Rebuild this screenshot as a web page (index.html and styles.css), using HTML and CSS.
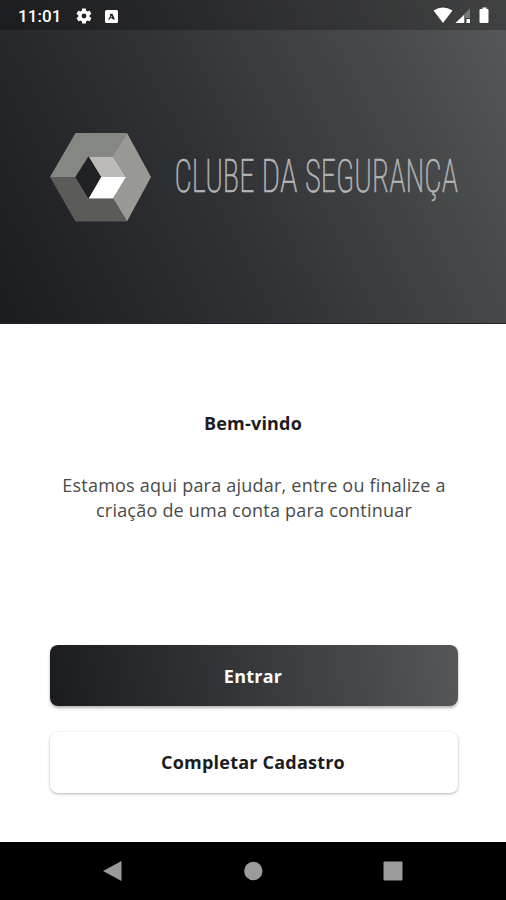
FILE: index.html
```
<!DOCTYPE html>
<html lang="pt-BR">
<head>
<meta charset="utf-8">
<title>Clube da Segurança</title>
<link rel="stylesheet" href="styles.css">
</head>
<body>
<div class="screen">
  <header class="hero">
    <div class="status">
      <span class="clock">11:01</span>
      <svg class="gear" viewBox="0 0 24 24"><path fill="#fff" fill-rule="evenodd" d="M19.4 13a7.500 7.500 0 0 0 0-2l2.100-1.700c.2-.1.200-.4.100-.6l-2-3.500c-.1-.2-.4-.3-.6-.2l-2.500 1a7.300 7.300 0 0 0-1.700-1l-.4-2.600c0-.2-.2-.4-.5-.4h-4c-.3 0-.5.2-.5.4l-.4 2.600a7.300 7.300 0 0 0-1.700 1l-2.500-1c-.2-.1-.5 0-.6.200l-2 3.500c-.1.200-.1.500.1.600L4.500 11a7.500 7.500 0 0 0 0 2l-2.100 1.700c-.2.100-.2.400-.1.600l2 3.500c.1.200.4.300.6.200l2.500-1c.5.400 1.100.7 1.700 1l.4 2.600c0 .2.200.4.500.4h4c.3 0 .5-.2.500-.4l.4-2.600c.6-.3 1.200-.6 1.700-1l2.500 1c.2.100.5 0 .6-.2l2-3.500c.1-.2.100-.5-.1-.6zM12 15.200a3.200 3.200 0 1 1 0-6.400 3.200 3.200 0 0 1 0 6.400z"/></svg>
      <svg class="badge" viewBox="0 0 13 13"><rect width="13" height="13" rx="1.500" fill="#fff"/><path d="M3 9.500 5 6.500V3.800H7.500L10 9.500H8L6.800 8.300H5.500L4.500 9.500z" fill="#292a2c"/><circle cx="6.300" cy="6.800" r=".6" fill="#fff"/></svg>
      <span class="spacer"></span>
      <svg class="signals" viewBox="0 0 60 20">
        <path d="M0.500 4.500Q10 -1.500 19.500 4.500L10 17z" fill="#fff"/>
        <path d="M37 2.500V12H32V17H22.500z" fill="#777a79"/>
        <path d="M31 9V17H22.500zM33.500 13h3.500v4H33.500z" fill="#fff"/>
        <path d="M47.500 3h2V1.500h4V3h1q1 0 1 1v12q0 1-1 1h-7q-1 0-1-1V4q0-1 1-1z" fill="#fff"/>
      </svg>
    </div>
    <div class="brand">
      <svg class="logo" viewBox="0 0 424 94" role="img" aria-label="Clube da Segurança">
        <path d="M0 46 25.500 2H77L64 25.500H38.500L25.500 46z" fill="#858783"/>
        <path d="M77 2 101 46 77 90.500 63 67.500 76 46 63 25.500z" fill="#999a96"/>
        <path d="M0 46H25.500L38.500 67.500H63L77 90.500H25.500z" fill="#5b5c59"/>
        <path d="M38.500 25.500H63L76 46H51z" fill="#bcbbb8"/>
        <path d="M51 46H76L63 67.500H38.500z" fill="#fff"/>
        <path d="M38.500 25.500 51 46 38.500 67.500 25.500 46z" fill="#1f2124"/>
        <g class="wordmark" transform="translate(0 60.500) scale(1 1.700)">
          <text x="124.500" textLength="80" lengthAdjust="spacingAndGlyphs">CLUBE</text>
          <text x="211.500" textLength="36" lengthAdjust="spacingAndGlyphs">DA</text>
          <text x="255" textLength="153" lengthAdjust="spacingAndGlyphs">SEGURANÇA</text>
        </g>
      </svg>
    </div>
  </header>
  <main class="content">
    <h1 class="title">Bem-vindo</h1>
    <p class="lead">Estamos aqui para ajudar, entre ou finalize a<br>criação de uma conta para continuar</p>
    <div class="actions">
      <button class="btn primary">Entrar</button>
      <button class="btn secondary">Completar Cadastro</button>
    </div>
  </main>
  <nav class="navbar">
    <svg class="key" viewBox="0 0 22 22"><path d="M1 11 19.500 1V21z" fill="#9b9b9b"/></svg>
    <svg class="key" viewBox="0 0 22 22"><circle cx="11.300" cy="11" r="9.200" fill="#9b9b9b"/></svg>
    <svg class="key" viewBox="0 0 22 22"><rect x="1.500" y="1.500" width="19" height="19" rx="1" fill="#9b9b9b"/></svg>
  </nav>
</div>
</body>
</html>
```
FILE: styles.css
```
* { box-sizing: border-box; }
body { margin: 0; }
.screen {
  width: 506px;
  height: 900px;
  display: flex;
  flex-direction: column;
  background: #fff;
  font-family: "Open Sans", sans-serif;
}
.hero {
  height: 324px;
  display: flex;
  flex-direction: column;
  background: linear-gradient(63deg, #1b1c1f, #313336 45%, #575859);
  border-bottom: 1px solid #222326;
}
.status {
  height: 30px;
  display: flex;
  align-items: center;
  padding: 2px 13px 0 18px;
  background: rgba(0, 0, 0, 0.25);
  color: #fff;
}
.clock {
  width: 57px;
  font: 500 17px/20px Roboto, sans-serif;
  letter-spacing: 0.1px;
}
.gear { width: 18px; height: 18px; margin-right: 12px; }
.badge { width: 13px; height: 13px; }
.spacer { flex: 1; }
.signals { width: 60px; height: 20px; margin-bottom: 1px; }
.brand { padding: 101px 32px 0 50px; }
.logo { display: block; width: 424px; height: 94px; }
.wordmark {
  font-family: Roboto, sans-serif;
  font-weight: 200;
  font-stretch: 75%;
  font-size: 27px;
  fill: #b4b5b7;
  stroke: #b4b5b7;
  stroke-width: 0.3px;
}
.content {
  height: 518px;
  display: flex;
  flex-direction: column;
  align-items: center;
  padding: 86px 48px 0 50px;
  color: #1c1c1e;
}
.title { margin: 0 2px 0 0; font-size: 18px; line-height: 26px; font-weight: 700; letter-spacing: 0.2px; }
.lead {
  margin: 37px 0 0;
  font-size: 18px;
  line-height: 24.5px;
  font-weight: 400;
  letter-spacing: 0.22px;
  text-align: center;
  white-space: nowrap;
  color: #4a4a4a;
}
.actions { width: 408px; display: flex; flex-direction: column; gap: 26px; margin-top: 123px; }
.btn {
  height: 61px;
  padding: 0 2px 0 0;
  border: 0;
  border-radius: 8px;
  font: 700 18px/26px "Open Sans", sans-serif;
  letter-spacing: 0.22px;
  box-shadow: 0 2px 3px rgba(0, 0, 0, 0.3);
}
.primary { color: #fff; background: linear-gradient(80deg, #1b1c1f, #303235 40%, #565758); }
.secondary { padding-bottom: 1px; color: #1c1c1e; background: #fff; box-shadow: 0 1px 3px rgba(0, 0, 0, 0.3); }
.navbar {
  height: 58px;
  display: flex;
  justify-content: space-between;
  padding: 18px 102px 0;
  background: #000;
}
.key { width: 22px; height: 22px; }
```
